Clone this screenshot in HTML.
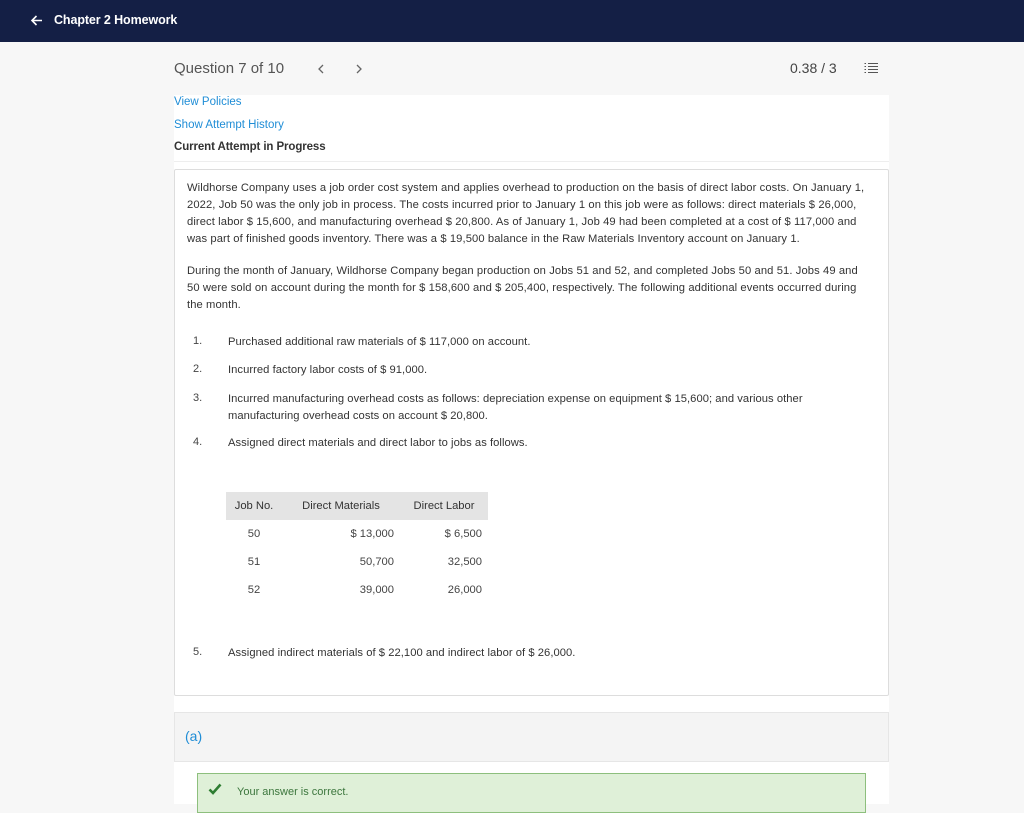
<!DOCTYPE html>
<html><head><meta charset="utf-8"><style>
*{margin:0;padding:0;box-sizing:border-box}
body{width:1024px;height:804px;background:#f7f7f7;font-family:"Liberation Sans",sans-serif;color:#333;position:relative;overflow:hidden}
.hdr{position:absolute;left:0;top:0;width:1024px;height:42px;background:#141f45;color:#fff}
.abs{position:absolute}
.main{position:absolute;left:174px;top:95px;width:715px;height:709px;background:#fff}
.box{position:absolute;left:174px;top:169px;width:715px;height:527px;border:1px solid #ddd;background:#fff;border-radius:2px}
.p{position:absolute;left:12px;width:688px;font-size:11.2px;line-height:17px;letter-spacing:0.1px;color:#333}
.li{position:absolute;font-size:11.2px;line-height:17px;letter-spacing:0.05px}
.n{position:absolute;left:18px;font-size:11px;color:#444}
table{position:absolute;left:51px;top:322px;border-collapse:collapse;font-size:11.2px;table-layout:fixed;width:262px}
th{background:#e4e4e4;font-weight:normal;height:28px;padding:0 6px;color:#333}
td{height:28px;padding:0 6px;color:#444}
</style></head><body>
<div class="hdr">
<svg class="abs" style="left:30px;top:14px" width="13" height="13" viewBox="0 0 13 13"><path d="M12 6.5H2M6.5 2L2 6.5l4.5 4.5" stroke="#fff" stroke-width="1.6" fill="none"/></svg>
<div class="abs" style="left:54px;top:13px;font-size:12.5px;font-weight:bold;letter-spacing:-0.1px">Chapter 2 Homework</div>
</div>
<div class="abs" style="left:174px;top:60px;font-size:15px;color:#555">Question 7 of 10</div>
<svg class="abs" style="left:317px;top:64px" width="8" height="10" viewBox="0 0 8 10"><path d="M6 1L2 5l4 4" stroke="#666" stroke-width="1.3" fill="none"/></svg>
<svg class="abs" style="left:355px;top:64px" width="8" height="10" viewBox="0 0 8 10"><path d="M2 1l4 4-4 4" stroke="#666" stroke-width="1.3" fill="none"/></svg>
<div class="abs" style="left:790px;top:60px;font-size:14px;color:#444">0.38 / 3</div>
<svg class="abs" style="left:864px;top:62px" width="14" height="12" viewBox="0 0 14 12"><path d="M4 1.5h10M4 4.5h10M4 7.5h10M4 10.5h10M0.5 1.5h1.5M0.5 4.5h1.5M0.5 7.5h1.5M0.5 10.5h1.5" stroke="#555" stroke-width="1"/></svg>
<div class="main"></div>
<div class="abs" style="left:174px;top:96px;font-size:11.5px;color:#1f8dd6">View Policies</div>
<div class="abs" style="left:174px;top:119px;font-size:11.5px;color:#1f8dd6">Show Attempt History</div>
<div class="abs" style="left:174px;top:141px;font-size:11.5px;font-weight:bold;color:#333;letter-spacing:-0.1px">Current Attempt in Progress</div>
<div class="abs" style="left:174px;top:161px;width:715px;height:1px;background:#eee"></div>
<div class="box">
<div class="p" style="top:10px">Wildhorse Company uses a job order cost system and applies overhead to production on the basis of direct labor costs. On January 1, 2022, Job 50 was the only job in process. The costs incurred prior to January 1 on this job were as follows: direct materials $ 26,000, direct labor $ 15,600, and manufacturing overhead $ 20,800. As of January 1, Job 49 had been completed at a cost of $ 117,000 and was part of finished goods inventory. There was a $ 19,500 balance in the Raw Materials Inventory account on January 1.</div>
<div class="p" style="top:93px">During the month of January, Wildhorse Company began production on Jobs 51 and 52, and completed Jobs 50 and 51. Jobs 49 and<br>50 were sold on account during the month for $ 158,600 and $ 205,400, respectively. The following additional events occurred during the month.</div>
<div class="n" style="top:165px">1.</div><div class="li" style="left:53px;top:164px">Purchased additional raw materials of $ 117,000 on account.</div>
<div class="n" style="top:193px">2.</div><div class="li" style="left:53px;top:192px">Incurred factory labor costs of $ 91,000.</div>
<div class="n" style="top:222px">3.</div><div class="li" style="left:53px;top:221px;width:620px">Incurred manufacturing overhead costs as follows: depreciation expense on equipment $ 15,600; and various other manufacturing overhead costs on account $ 20,800.</div>
<div class="n" style="top:266px">4.</div><div class="li" style="left:53px;top:265px">Assigned direct materials and direct labor to jobs as follows.</div>
<table>
<colgroup><col style="width:56px"><col style="width:118px"><col style="width:88px"></colgroup>
<tr><th>Job No.</th><th>Direct Materials</th><th>Direct Labor</th></tr>
<tr><td style="text-align:center">50</td><td style="text-align:right">$ 13,000</td><td style="text-align:right">$ 6,500</td></tr>
<tr><td style="text-align:center">51</td><td style="text-align:right">50,700</td><td style="text-align:right">32,500</td></tr>
<tr><td style="text-align:center">52</td><td style="text-align:right">39,000</td><td style="text-align:right">26,000</td></tr>
</table>
<div class="n" style="top:476px">5.</div><div class="li" style="left:53px;top:475px">Assigned indirect materials of $ 22,100 and indirect labor of $ 26,000.</div>
</div>
<div class="abs" style="left:174px;top:712px;width:715px;height:50px;background:#f4f4f4;border:1px solid #e6e6e6"></div>
<div class="abs" style="left:185px;top:728px;font-size:14px;color:#1f8dd6">(a)</div>
<div class="abs" style="left:197px;top:773px;width:669px;height:40px;background:#dff0d8;border:1px solid #8dbf7d"></div>
<svg class="abs" style="left:208px;top:783px" width="14" height="12" viewBox="0 0 14 12"><path d="M1.5 6.5l3.5 3.5L12.5 1.5" stroke="#2e7d32" stroke-width="2.6" fill="none"/></svg>
<div class="abs" style="left:237px;top:786px;font-size:11px;color:#3c763d">Your answer is correct.</div>
</body></html>
